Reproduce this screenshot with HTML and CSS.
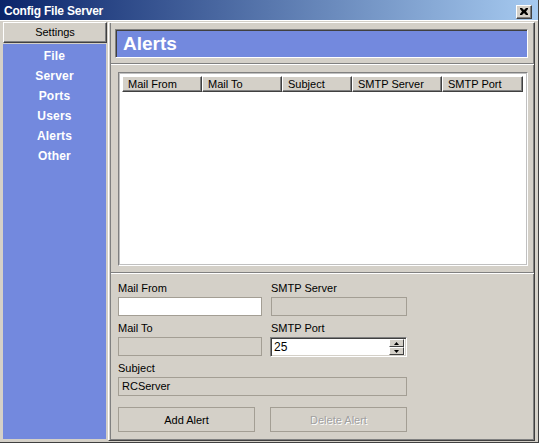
FILE: index.html
```html
<!DOCTYPE html>
<html>
<head>
<meta charset="utf-8">
<title>Config File Server</title>
<link rel="stylesheet" href="styles.css">
</head>
<body>
<div class="window">
  <div class="titlebar">
    <span class="title">Config File Server</span>
    <span class="close">
      <svg width="8" height="7" viewBox="0 0 8 7"><path d="M0 0h2l2 2 2-2h2v1L6 3.5 8 6v1H6L4 5 2 7H0V6l2-2.5L0 1z" fill="#000"/></svg>
    </span>
  </div>
  <div class="body">
    <div class="sidebar">
      <div class="settings">Settings</div>
      <ul class="nav">
        <li>File</li>
        <li>Server</li>
        <li>Ports</li>
        <li>Users</li>
        <li>Alerts</li>
        <li>Other</li>
      </ul>
    </div>
    <div class="main">
      <div class="head-sec">
        <div class="headbox">Alerts</div>
      </div>
      <div class="list-sec">
        <div class="list">
          <div class="list-head">
            <div class="col c1">Mail From</div>
            <div class="col c2">Mail To</div>
            <div class="col c3">Subject</div>
            <div class="col c4">SMTP Server</div>
            <div class="col c5">SMTP Port</div>
          </div>
        </div>
      </div>
      <div class="form-sec">
        <div class="grid">
          <div class="field">
            <div class="label">Mail From</div>
            <div class="input"></div>
          </div>
          <div class="field">
            <div class="label">SMTP Server</div>
            <div class="input disabled"></div>
          </div>
          <div class="field">
            <div class="label">Mail To</div>
            <div class="input disabled"></div>
          </div>
          <div class="field">
            <div class="label">SMTP Port</div>
            <div class="spinner">
              <span class="spin-val">25</span>
              <span class="spin-btns">
                <span class="spin-btn"><svg width="5" height="3" viewBox="0 0 5 3"><path d="M2.5 0L5 3H0z" fill="#000"/></svg></span>
                <span class="spin-btn"><svg width="5" height="3" viewBox="0 0 5 3"><path d="M0 0h5L2.5 3z" fill="#000"/></svg></span>
              </span>
            </div>
          </div>
          <div class="field wide">
            <div class="label">Subject</div>
            <div class="input disabled">RCServer</div>
          </div>
        </div>
        <div class="buttons">
          <div class="btn add">Add Alert</div>
          <div class="btn del">Delete Alert</div>
        </div>
      </div>
    </div>
  </div>
</div>
</body>
</html>
```
FILE: styles.css
```css
html, body {
  margin: 0;
  padding: 0;
}
body {
  width: 539px;
  height: 443px;
  overflow: hidden;
  background: #d4d0c8;
  font-family: "Liberation Sans", Arial, sans-serif;
  font-size: 11px;
  color: #000;
}
.window {
  width: 539px;
  height: 443px;
  box-sizing: border-box;
  display: flex;
  flex-direction: column;
  background: #d4d0c8;
  border-right: 1px solid #404040;
  border-bottom: 1px solid #404040;
}
.titlebar {
  flex: none;
  box-sizing: border-box;
  padding: 3px 0 0 4px;
  background: linear-gradient(to right, #0a246a, #a6caf0);
  border-bottom: 1px solid #fff;
  height: 21px;
  position: relative;
}
.title {
  color: #fff;
  font-weight: bold;
  font-size: 12px;
  line-height: 16px;
  display: block;
  letter-spacing: -0.2px;
}
.close {
  position: absolute;
  left: 516px;
  top: 5px;
  width: 16px;
  height: 14px;
  box-sizing: border-box;
  background: #d4d0c8;
  border-top: 1px solid #fff;
  border-left: 1px solid #fff;
  border-right: 1px solid #404040;
  border-bottom: 1px solid #404040;
  box-shadow: inset -1px -1px 0 #808080;
  display: flex;
  align-items: center;
  justify-content: center;
}
.close svg {
  display: block;
  margin: 0 1px 1px 0;
}
.body {
  flex: 1;
  display: flex;
  padding: 1px 3px 1px 3px;
  min-height: 0;
}
.sidebar {
  width: 104px;
  flex: none;
  display: flex;
  flex-direction: column;
}
.settings {
  height: 21px;
  box-sizing: border-box;
  background: #d4d0c8;
  border-top: 1px solid #fff;
  border-left: 1px solid #fff;
  border-right: 1px solid #404040;
  border-bottom: 1px solid #404040;
  box-shadow: inset -1px -1px 0 #808080;
  text-align: center;
  line-height: 19px;
}
.nav {
  flex: 1;
  list-style: none;
  margin: 1px 1px 2px 0;
  padding: 2px 0 0 0;
  background: #7389de;
}
.nav li {
  height: 20px;
  line-height: 20px;
  text-align: center;
  color: #fff;
  font-weight: bold;
  font-size: 12px;
  letter-spacing: 0.2px;
}
.main {
  flex: 1;
  margin-left: 1px;
  display: flex;
  flex-direction: column;
  border-top: 1px solid #fff;
  border-left: 1px solid #fff;
  border-right: 1px solid #404040;
  border-bottom: 1px solid #404040;
  box-shadow: inset 1px 0 0 #d4d0c8, inset 2px 0 0 #808080, inset -1px -1px 0 #808080;
}
.head-sec {
  padding: 6px 6px 5px 6px;
}
.headbox {
  height: 29px;
  box-sizing: border-box;
  background: #7389de;
  border-top: 1px solid #808080;
  border-left: 1px solid #808080;
  border-right: 1px solid #fff;
  border-bottom: 1px solid #fff;
  box-shadow: inset 1px 1px 0 #404040;
  color: #fff;
  font-weight: bold;
  font-size: 19px;
  line-height: 28px;
  padding-left: 7px;
}
.list-sec {
  flex: none;
  border-top: 1px solid #808080;
  box-shadow: inset 0 1px 0 #fff;
  padding: 8px 6px 6px 7px;
  margin-left: 2px;
}
.list {
  height: 194px;
  box-sizing: border-box;
  background: #fff;
  border-top: 1px solid #808080;
  border-left: 1px solid #808080;
  border-right: 1px solid #fff;
  border-bottom: 1px solid #fff;
  box-shadow: 0 0 0 1px #c0c0c0 inset;
  padding: 3px 3px 0 3px;
}
.list-head {
  display: flex;
  height: 16px;
}
.col {
  box-sizing: border-box;
  height: 16px;
  background: #d4d0c8;
  border-top: 1px solid #fff;
  border-left: 1px solid #fff;
  border-right: 1px solid #404040;
  border-bottom: 1px solid #404040;
  box-shadow: inset -1px -1px 0 #808080;
  padding-left: 5px;
  line-height: 15px;
  white-space: nowrap;
  overflow: hidden;
}
.c1 { width: 80px; }
.c2 { width: 80px; }
.c3 { width: 70px; }
.c4 { width: 90px; }
.c5 { width: 81px; }
.form-sec {
  flex: 1;
  border-top: 1px solid #808080;
  box-shadow: inset 0 1px 0 #fff;
  margin-left: 2px;
  padding: 7px 0 0 7px;
}
.grid {
  display: grid;
  grid-template-columns: 144px 136px;
  column-gap: 9px;
  row-gap: 4px;
}
.field {
  height: 36px;
}
.field.wide {
  grid-column: 1 / span 2;
}
.label {
  height: 17px;
  line-height: 17px;
}
.input {
  height: 19px;
  box-sizing: border-box;
  background: #fff;
  border: 1px solid #a39e94;
  padding-left: 3px;
  line-height: 17px;
}
.input.disabled {
  background: #d4d0c8;
}
.spinner {
  height: 20px;
  margin-left: -1px;
  box-sizing: border-box;
  background: #fff;
  border-top: 1px solid #808080;
  border-left: 1px solid #808080;
  border-right: 1px solid #fff;
  border-bottom: 1px solid #fff;
  box-shadow: inset 1px 1px 0 #404040, inset -1px -1px 0 #d4d0c8;
  display: flex;
  align-items: center;
  padding: 2px 2px 2px 3px;
}
.spin-val {
  flex: 1;
  font-size: 12px;
  line-height: 16px;
}
.spin-btns {
  width: 15px;
  height: 16px;
  display: flex;
  flex-direction: column;
}
.spin-btn {
  height: 8px;
  box-sizing: border-box;
  background: #d4d0c8;
  border-top: 1px solid #fff;
  border-left: 1px solid #fff;
  border-right: 1px solid #404040;
  border-bottom: 1px solid #404040;
  display: flex;
  align-items: center;
  justify-content: center;
}
.spin-btn svg {
  display: block;
}
.buttons {
  display: flex;
  margin-top: 11px;
}
.btn {
  height: 25px;
  box-sizing: border-box;
  border: 1px solid #a39e94;
  background: #d4d0c8;
  text-align: center;
  line-height: 24px;
}
.add {
  width: 137px;
}
.del {
  width: 137px;
  margin-left: 15px;
  color: #a0a0a0;
  text-shadow: 1px 1px 0 #fff;
}
```
